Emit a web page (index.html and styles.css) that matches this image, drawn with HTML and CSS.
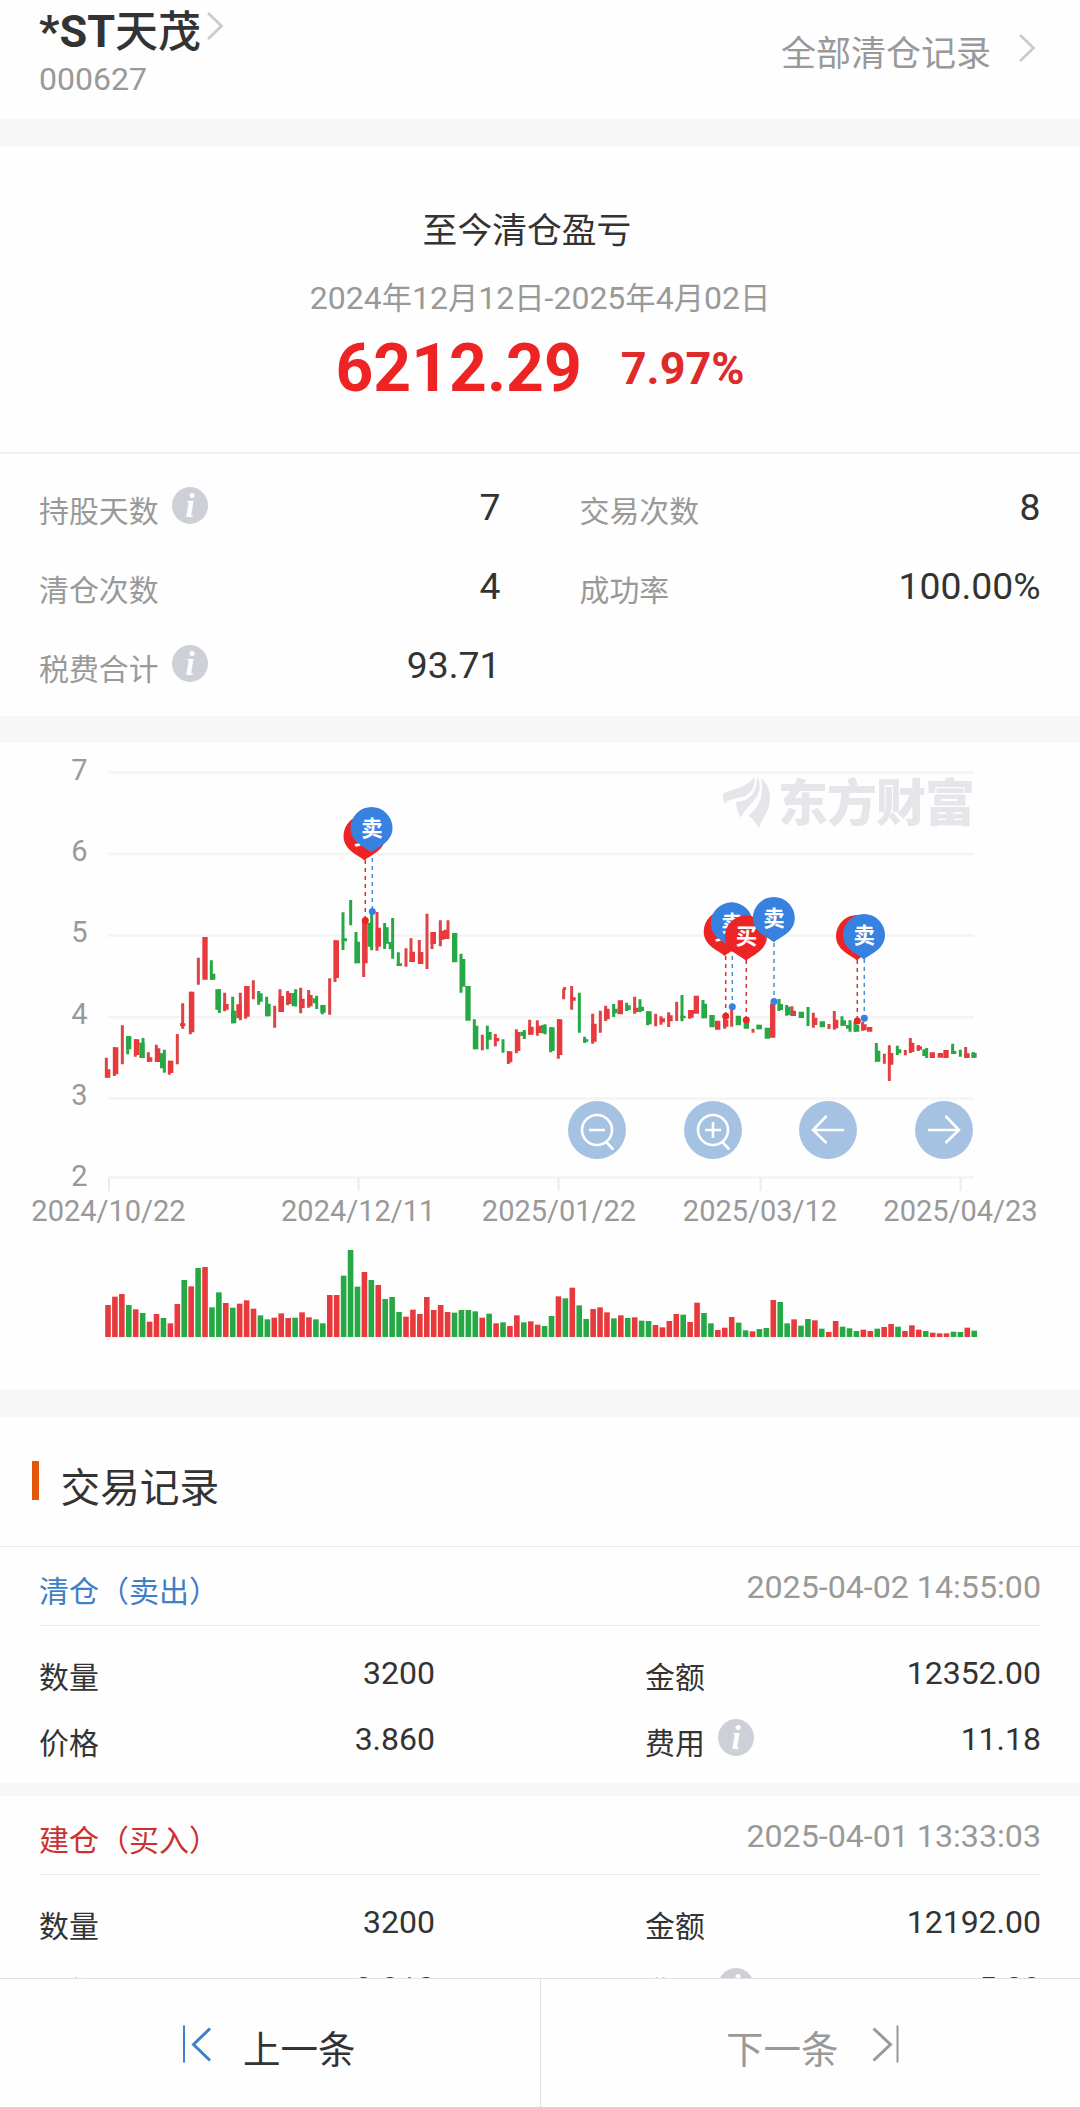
FILE: index.html
```html
<!DOCTYPE html>
<html lang="zh-CN">
<head>
<meta charset="utf-8">
<title>*ST天茂 清仓记录</title>
<link rel="stylesheet" href="styles.css">
</head>
<body>
<svg class="defs" aria-hidden="true">
  <symbol id="info" viewBox="0 0 36 37">
    <ellipse cx="18" cy="18.5" rx="18" ry="18.5" fill="#cdd0d6"/>
    <text x="18.2" y="29.8" text-anchor="middle" class="info-letter">i</text>
  </symbol>
  <symbol id="chevron" viewBox="0 0 18 30">
    <path d="M2 2 15.500 15 2 28" fill="none" stroke="#ccc" stroke-width="2.800"/>
  </symbol>
  <path id="pin" d="M0 24.500C-4 20-21 15-21 0A21 21 0 0 1 21 0C21 15 4 20 0 24.500Z"/>
</svg>

<main class="content">
  <header class="top">
    <div class="stock">
      <h1 class="stock-name"><span>*ST</span><span class="stock-cn">天茂</span><svg class="chevron"><use href="#chevron"/></svg></h1>
      <p class="stock-code">000627</p>
    </div>
    <a class="all-records">全部清仓记录<svg class="chevron"><use href="#chevron"/></svg></a>
  </header>

  <section class="summary">
    <h2 class="summary-title">至今清仓盈亏</h2>
    <p class="period">2024<i>年</i>12<i>月</i>12<i>日</i>-2025<i>年</i>4<i>月</i>02<i>日</i></p>
    <p class="profit"><span class="amount">6212.29</span><span class="rate">7.97%</span></p>
  </section>

  <section class="stats">
    <div class="stat"><span class="label">持股天数</span><svg class="info"><use href="#info"/></svg><span class="value">7</span></div>
    <div class="stat"><span class="label">交易次数</span><span class="value">8</span></div>
    <div class="stat"><span class="label">清仓次数</span><span class="value">4</span></div>
    <div class="stat"><span class="label">成功率</span><span class="value">100.00%</span></div>
    <div class="stat"><span class="label">税费合计</span><svg class="info"><use href="#info"/></svg><span class="value">93.71</span></div>
  </section>

  <section class="chart">
    <svg class="plot" viewBox="0 743 1080 647">
      <path class="grid" d="M108 772.500H974M108 854H974M108 935.500H974M108 1017H974M108 1098.500H974M108 1177.500H974"/>
      <path class="ticks" d="M109 1178V1191M358.500 1178V1191M558.500 1178V1191M760.500 1178V1191M960.500 1178V1191"/>
      <g class="axis y-axis">
        <text x="87.500" y="780">7</text><text x="87.500" y="861">6</text><text x="87.500" y="942">5</text>
        <text x="87.500" y="1023.500">4</text><text x="87.500" y="1104.500">3</text><text x="87.500" y="1185.500">2</text>
      </g>
      <g class="axis x-axis">
        <text x="108.500" y="1221.300">2024/10/22</text><text x="358.200" y="1221.300">2024/12/11</text>
        <text x="559" y="1221.300">2025/01/22</text><text x="760" y="1221.300">2025/03/12</text>
        <text x="960.500" y="1221.300">2025/04/23</text>
      </g>

      <g class="brand">
        <g transform="translate(680 760) scale(.33333)">
          <path d="M130 101C165 82 195 88 223 50C226 82 214 104 184 112C160 116 144 121 134 131C128 120 128 110 130 101Z"/>
          <path d="M231 48C246 78 240 100 220 124C202 145 188 158 183 173C173 157 168 138 169 126C208 124 232 98 231 48Z"/>
          <path d="M242 53C274 80 277 122 260 157C250 176 242 190 236 204C229 189 218 176 206 167C238 142 254 104 242 53Z"/>
        </g>
        <text x="778" y="821" textLength="197">东方财富</text>
      </g>

      <!-- candles, in thirds of a pixel: wicks 9 wide, bodies 16 wide -->
      <g transform="translate(90 780) scale(.33333)">
        <path class="wick up" d="M49 833V893M73 802V888M97 736V853M136 778V830M175 817V845M199 794V846M238 842V884M262 762V853M278 670V746M301 635V763M325 533V614M404 638V694M451 638V721M467 618V716M490 601V658M554 677V743M570 628V696M593 633V676M632 623V700M656 630V683M719 595V704M735 481V606M821 420V591M861 396V512M948 505V560M963 475V546"/>
        <path class="body up" d="M53 868V893M77 802V883M140 778V825M179 832V845M203 805V846M242 842V879M278 730V738M305 635V757M345 471V599M408 672V689M447 673V714M471 618V710M574 648V696M597 639V672M636 656V684M660 645V679M739 481V594M825 420V550M865 443V500M967 515V546"/>
        <path class="wick down" d="M113 768V823M159 774V834M223 809V878M364 541V599M388 628V699M428 650V730M506 633V674M530 650V709M617 628V679M680 647V687M697 675V703M759 397V510M782 360V436M798 456V550M845 400V511M884 429V507M908 414V536M925 517V558"/>
        <path class="body down" d="M116 768V808M156 788V834M218 820V865M368 581V599M384 628V689M431 692V730M510 640V665M534 671V709M613 639V679M676 655V670M699 675V698M763 475V484M802 485V550M841 428V500M888 442V491M904 486V508M928 550V558"/>
      </g>
      <g transform="translate(400 860) scale(.33333)">
        <path class="wick up" d="M58 240V312M81 161V327M96 216V267M121 181V259M144 181V237M247 524V571M286 522V559M325 574V612M349 508V580M389 479V524M412 481V527M475 478V596M491 386V418M494 381V390M515 378V449M578 461V551M601 452V518M617 437V483M704 410V461M767 461V499M783 469V494M806 457V501M830 425V483M869 450V476"/>
        <path class="body up" d="M62 276V312M100 216V252M125 212V239M139 209V237M290 534V544M329 574V607M353 516V573M393 500V524M416 497V519M479 478V585M519 412V422M582 491V545M621 446V478M661 421V463M708 443V456M787 475V487M810 466V484M873 450V473M889 407V461"/>
        <path class="wick down" d="M183 281V398M223 478V568M262 497V568M309 538V578M373 510V537M435 493V523M452 502V577M538 398V518M554 530V549M641 432V471M680 428V453M720 418V457M743 454V496M846 405V484"/>
        <path class="body down" d="M164 219V307M188 297V380M204 378V482M227 497V568M267 516V539M369 515V528M431 495V520M456 502V573M557 538V545M645 446V460M684 436V450M724 440V453M747 454V493M849 467V475"/>
      </g>
      <g transform="translate(680 760) scale(.33333)">
        <path class="wick up" d="M134 775V806M155 745V800M219 806V818M336 739V768M400 758V803M447 792V807M463 753V809M548 785V812M613 881V911M628 856V963M676 870V886M691 834V879M715 855V873M857 861V894"/>
        <path class="body up" d="M113 782V809M137 780V800M278 731V833M340 752V768M404 773V795M467 779V805M552 793V811M569 801V815M632 879V914M695 848V876M718 859V869M757 877V894M781 879V893M798 870V894M861 880V894"/>
        <path class="wick down" d="M69 720V775M234 794V808M297 717V753M320 735V767M384 741V798M486 769V797M510 781V815M525 785V815M589 849V905M652 857V885M740 864V894M818 851V882M841 869V890M880 876V893"/>
        <path class="body down" d="M73 731V775M96 765V802M175 767V796M199 788V806M238 794V808M262 803V836M301 732V750M324 740V765M364 755V774M427 784V802M490 781V797M506 795V806M530 795V815M593 872V905M656 868V880M735 868V888M821 873V882M882 879V893"/>
      </g>

      <g class="volume" id="volume"></g>

      <g class="trade-lines buy"><path d="M365.300 860V918M725.700 956V1014M746.300 960V1018M857.300 960V1019"/></g>
      <g class="trade-lines sell"><path d="M372.300 858V909M732.300 948V1004M774 943V999M864.300 959V1016"/></g>
      <g class="buy"><circle cx="365.300" cy="920.500" r="3.500"/><circle cx="725.700" cy="1016.300" r="3.500"/><circle cx="746.300" cy="1020" r="3.500"/><circle cx="857.300" cy="1021" r="3.500"/></g>
      <g class="sell"><circle cx="372.300" cy="911.500" r="3.500"/><circle cx="732.300" cy="1006.700" r="3.500"/><circle cx="774" cy="1001.500" r="3.500"/><circle cx="864.300" cy="1018.300" r="3.500"/></g>
      <g class="pins">
        <use href="#pin" class="buy" x="364.500" y="836"/><text x="364.500" y="843.500">买</text>
        <use href="#pin" class="sell" x="371.500" y="828"/><text x="372" y="835.500">卖</text>
        <use href="#pin" class="buy" x="724.700" y="931.500"/><text x="725" y="939">买</text>
        <use href="#pin" class="sell" x="731.700" y="923.300"/><text x="732" y="930.800">卖</text>
        <use href="#pin" class="buy" x="746" y="936.300"/><text x="746.500" y="943.800">买</text>
        <use href="#pin" class="sell" x="773.800" y="918"/><text x="774" y="925.500">卖</text>
        <use href="#pin" class="buy" x="857" y="936"/><text x="857" y="943.500">买</text>
        <use href="#pin" class="sell" x="864" y="935"/><text x="864.300" y="942.500">卖</text>
      </g>
    </svg>
    <div class="chart-tools">
      <button class="tool" aria-label="缩小"><svg viewBox="-29 -29 58 58"><circle r="15"/><path d="M-8 0H8M9.300 12 16.300 19.500"/></svg></button>
      <button class="tool" aria-label="放大"><svg viewBox="-29 -29 58 58"><circle r="15"/><path d="M-8 0H8M0-8V8M9.300 12 16.300 19.500"/></svg></button>
      <button class="tool" aria-label="向左"><svg viewBox="-29 -29 58 58"><path d="M16 0H-15M-1.500-14-15 0-1.500 13"/></svg></button>
      <button class="tool" aria-label="向右"><svg viewBox="-29 -29 58 58"><path d="M-16 0H15M1.500-14 15 0 1.500 13"/></svg></button>
    </div>
  </section>

  <section class="records">
    <h2 class="records-title">交易记录</h2>
    <article class="record">
      <div class="record-head"><span class="kind kind-sell">清仓（卖出）</span><time>2025-04-02 14:55:00</time></div>
      <div class="record-body">
        <div class="field"><span class="label">数量</span><span class="value">3200</span></div>
        <div class="field"><span class="label">金额</span><span class="value">12352.00</span></div>
        <div class="field"><span class="label">价格</span><span class="value">3.860</span></div>
        <div class="field"><span class="label">费用</span><svg class="info"><use href="#info"/></svg><span class="value">11.18</span></div>
      </div>
    </article>
    <article class="record">
      <div class="record-head"><span class="kind kind-buy">建仓（买入）</span><time>2025-04-01 13:33:03</time></div>
      <div class="record-body">
        <div class="field"><span class="label">数量</span><span class="value">3200</span></div>
        <div class="field"><span class="label">金额</span><span class="value">12192.00</span></div>
        <div class="field"><span class="label">价格</span><span class="value">3.810</span></div>
        <div class="field"><span class="label">费用</span><svg class="info"><use href="#info"/></svg><span class="value">5.09</span></div>
      </div>
    </article>
  </section>
</main>

<footer class="pager">
  <a class="page prev"><svg viewBox="0 0 30 38"><path class="bar" d="M2 .500V37.500"/><path d="M28 3.500 11.500 19.500 28 35.500"/></svg>上一条</a>
  <a class="page next">下一条<svg viewBox="0 0 30 38"><path class="bar" d="M26.500 .500V37.500"/><path d="M2.500 3.500 19.500 19.500 2.500 35.500"/></svg></a>
</footer>
<script src="chart.js"></script>
</body>
</html>
```

FILE: styles.css
```css
* { box-sizing: border-box; margin: 0; padding: 0; }

body {
  display: flex;
  flex-direction: column;
  width: 1080px;
  height: 2107px;
  overflow: hidden;
  background: #fefefe;
  color: #333;
  font-family: Roboto, "Noto Sans CJK SC", sans-serif;
}

i { font-style: normal; }
.defs { position: absolute; width: 0; height: 0; }
.content { flex: 1; min-height: 0; overflow: hidden; }
.info { width: 36px; height: 37px; flex: none; }
.info-letter { font: italic bold 33px "Liberation Serif", serif; fill: #fff; }
.chevron { width: 18px; height: 30px; flex: none; }

/* header */
.top {
  display: flex;
  justify-content: space-between;
  height: 146px;
  padding: 7px 44px 0 39px;
  border-bottom: 27px solid #f7f7f7;
}
.stock-name { display: flex; font-size: 45px; line-height: 50px; font-weight: 700; }
.stock-cn { font-size: 43px; font-weight: 500; }
.stock-name .chevron { margin: 4px 0 0 5px; }
.stock-code { margin-top: 4px; font-size: 32px; line-height: 36px; color: #999; }
.all-records { display: flex; padding-top: 23px; font-size: 35px; line-height: 50px; color: #999; }
.all-records .chevron { margin: 3px 0 0 27px; }

/* profit summary */
.summary { height: 308px; padding-top: 60px; border-bottom: 2px solid #f2f2f2; text-align: center; }
.summary-title { padding-right: 26px; font-size: 34.800px; line-height: 50px; font-weight: 400; }
.period { margin-top: 22px; font-size: 32px; line-height: 40px; color: #999; }
.period i { font-size: 30.300px; }
.profit { display: flex; justify-content: center; align-items: center; gap: 39px; height: 80px; margin-top: 9px; font-weight: 700; }
.amount { font-size: 66px; color: #ee2424; }
.rate { font-size: 45px; color: #dd2a2a; }

/* statistics */
.stats {
  display: grid;
  grid-template-columns: 461.500px 461px;
  grid-auto-rows: 79px;
  column-gap: 79px;
  height: 289px;
  padding: 14px 38.500px 0 39px;
  border-bottom: 27px solid #f7f7f7;
}
.stat, .field { display: flex; align-items: center; }
.label { padding-top: 8px; font-size: 29.900px; line-height: 40px; }
.stat .label { color: #999; }
.info { margin: 0 0 4px 13px; }
.value { margin-left: auto; padding-bottom: 2px; }
.stat .value { font-size: 37.300px; }

/* chart */
.chart { position: relative; height: 674px; border-bottom: 27px solid #f7f7f7; }
.plot { display: block; width: 1080px; height: 647px; }
.grid { stroke: #f4f4f4; stroke-width: 2.500; }
.ticks { stroke: #ebebeb; stroke-width: 2; }
.axis { font-size: 29px; fill: #999; }
.y-axis { text-anchor: end; }
.x-axis { text-anchor: middle; }
.brand { fill: #e6e6ea; }
.brand text { font: 900 50px "Noto Sans CJK SC", sans-serif; }
.wick, .body { fill: none; }
.wick { stroke-width: 9; }
.body { stroke-width: 16; }
.up { stroke: #e8393c; }
.down { stroke: #26a845; }
.wick.up { stroke: #dc4448; }
.volume .rise { fill: #e8393c; }
.volume .fall { fill: #26a845; }
.buy { fill: #ee2424; stroke: #d93030; }
.sell { fill: #3781e0; stroke: #4a8fd6; }
.pins use, .buy circle, .sell circle { stroke: none; }
.trade-lines { fill: none; stroke-width: 1.500; stroke-dasharray: 4 4; }
.pins text { font: 700 21.500px "Noto Sans CJK SC", sans-serif; fill: #fff; text-anchor: middle; }
.chart-tools {
  position: absolute;
  top: 358px;
  left: 568px;
  display: flex;
  justify-content: space-between;
  width: 405px;
}
.tool { width: 58px; height: 58px; border: 0; border-radius: 50%; background: #a5c2e3; }
.tool svg { display: block; width: 58px; height: 58px; fill: none; stroke: #fff; stroke-width: 2.600; }

/* trade records */
.records-title {
  height: 130px;
  padding: 42px 0 0 60.500px;
  border-bottom: 1px solid #e8e8e8;
  background: linear-gradient(#e4570a, #e4570a) 32px 44px / 7px 39px no-repeat;
  font-size: 39.700px;
  line-height: 60px;
  font-weight: 400;
}
.record { height: 249px; padding: 0 39px; border-bottom: 13px solid #f7f7f7; }
.record-head {
  display: flex;
  justify-content: space-between;
  align-items: center;
  height: 79px;
  border-bottom: 1px solid #e8e8e8;
}
.kind { padding-top: 11px; font-size: 30px; line-height: 40px; }
.kind-sell { color: #3f7fc8; }
.kind-buy { color: #cc3030; }
.record-head time { padding-top: 1px; font-size: 32.200px; color: #999; }
.record-body { display: grid; grid-template-columns: 396px 396px; grid-auto-rows: 66px; justify-content: space-between; padding-top: 14px; }
.field .label { padding-top: 10px; }
.field .value { font-size: 32px; padding-bottom: 1px; }

/* previous / next */
.pager { display: flex; height: 129px; border-top: 1px solid #e2e2e2; background: #fefefe; }
.page { display: flex; font-size: 37.500px; line-height: 50px; padding-top: 46px; }
.page svg { width: 30px; height: 38px; fill: none; stroke: #3d7fc8; stroke-width: 3; }
.page .bar { stroke-width: 2; }
.prev { width: 541px; padding-left: 182px; gap: 31px; border-right: 1px solid #e2e2e2; }
.next { flex: 1; padding-left: 185px; gap: 32px; color: #999; }
.next svg { stroke: #999; }
```

FILE: chart.js
```js
// Daily volume bars: "r" closed up, "g" closed down; heights in thirds of a pixel.
const volume =
  "r96 r121 r129 g96 r83 g72 r46 r69 g57 r41 r99 g171 r152 g207 r210 g89 g134 r102 g88 r100 r110 r85 g65 g53 " +
  "r58 r71 r57 g58 r74 r59 g53 g41 r126 r126 g184 g261 g151 r195 g171 r156 g114 g120 g75 r61 r82 r69 r120 r81 " +
  "r96 r75 g73 g81 g81 g77 r58 g70 r41 g44 r33 r65 g44 r47 r37 g33 g63 r122 g116 r148 g95 g54 r84 r89 r74 g56 " +
  "r65 g57 r59 g49 g48 r36 r29 r48 r69 g67 r45 r103 g72 g41 r21 r28 r60 g43 g20 r17 g24 g27 r111 g105 g41 r53 " +
  "g34 g54 r50 g25 r15 r48 g31 g26 g18 r22 r18 g25 r30 r39 g31 r18 r35 r22 g18 r13 r11 r11 g16 g15 r28 g19";

const group = document.getElementById("volume");
volume.split(" ").forEach((item, i) => {
  const height = Number(item.slice(1)) / 3;
  const bar = document.createElementNS("http://www.w3.org/2000/svg", "rect");
  bar.setAttribute("class", item[0] === "r" ? "rise" : "fall");
  bar.setAttribute("x", (105.2 + i * 6.93).toFixed(2));
  bar.setAttribute("y", (1337 - height).toFixed(2));
  bar.setAttribute("width", 5.6);
  bar.setAttribute("height", height.toFixed(2));
  group.appendChild(bar);
});
```
